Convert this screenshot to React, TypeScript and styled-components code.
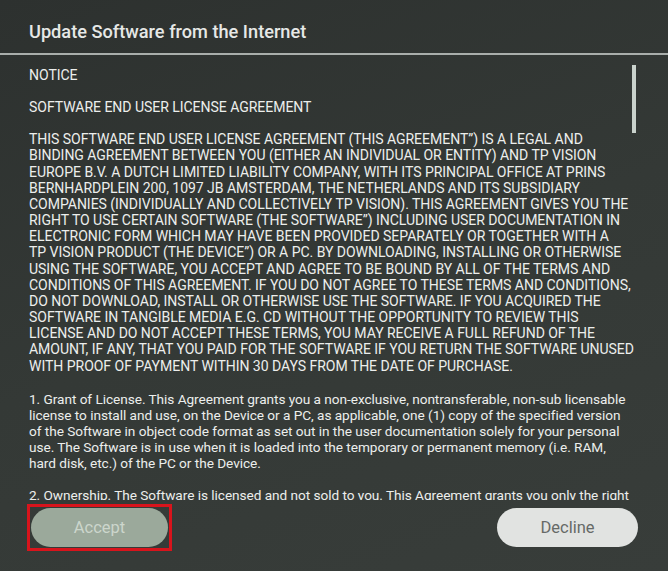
import React from "react";
import styled, { createGlobalStyle } from "styled-components";

const Global = createGlobalStyle`
  html, body { margin: 0; padding: 0; }
  body { width: 668px; height: 571px; overflow: hidden; background: #333835; }
`;

const Screen = styled.div`
  width: 668px;
  height: 571px;
  display: flex;
  flex-direction: column;
  background: linear-gradient(160deg, #2d312f 0%, #343936 50%, #383d3a 100%);
  font-family: Roboto, "Liberation Sans", sans-serif;
  color: #eef0ee;
  overflow: hidden;
`;

const Header = styled.div`
  height: 53px;
  display: flex;
  align-items: center;
  padding: 0 29px;
  border-bottom: 2px solid #a9aeab;
  flex-shrink: 0;
`;

const Title = styled.h1`
  margin: 0;
  font-size: 18.2px;
  font-weight: 500;
  color: #e6e8e6;
  padding-top: 10px;
`;

const Body = styled.div`
  position: relative;
  height: 445px;
  overflow: hidden;
  flex-shrink: 0;
`;

const Content = styled.div`
  padding: 12px 0 0 29px;
  line-height: 16.15px;
  color: #eceeec;
`;

const Para = styled.p<{ $caps?: boolean; $gap?: number }>`
  margin: 0 0 ${(p) => p.$gap ?? 16}px 0;
  white-space: nowrap;
  font-size: ${(p) => (p.$caps ? "14.05px" : "13.65px")};
  letter-spacing: -0.05px;
`;

const ScrollThumb = styled.div`
  position: absolute;
  left: 632px;
  top: 10px;
  width: 4px;
  height: 68px;
  background: #c9d2cc;
`;

const Footer = styled.div`
  flex: 1;
  display: flex;
  justify-content: space-between;
  align-items: flex-start;
  padding: 4px 30px 0 27px;
`;

const Focus = styled.div`
  border: 3px solid #d8141c;
  padding: 1px;
  display: flex;
`;

const Button = styled.button<{ $variant: "accept" | "decline" }>`
  width: ${(p) => (p.$variant === "accept" ? "137px" : "141px")};
  height: 39px;
  margin-top: ${(p) => (p.$variant === "accept" ? "0" : "4px")};
  border: none;
  border-radius: 20px;
  font-family: Roboto, "Liberation Sans", sans-serif;
  font-size: 16.5px;
  background: ${(p) => (p.$variant === "accept" ? "#9ba99b" : "#e1e3e1")};
  color: ${(p) => (p.$variant === "accept" ? "#ccd6cc" : "#666a67")};
  padding: 0;
`;

type P = { lines: string[]; caps?: boolean; gap?: number };

const paragraphs: P[] = [
  { caps: true, lines: ["NOTICE"] },
  { caps: true, lines: ["SOFTWARE END USER LICENSE AGREEMENT"] },
  {
    caps: true,
    gap: 17,
    lines: [
      "THIS SOFTWARE END USER LICENSE AGREEMENT (THIS AGREEMENT\u201d) IS A LEGAL AND",
      "BINDING AGREEMENT BETWEEN YOU (EITHER AN INDIVIDUAL OR ENTITY) AND TP VISION",
      "EUROPE B.V. A DUTCH LIMITED LIABILITY COMPANY, WITH ITS PRINCIPAL OFFICE AT PRINS",
      "BERNHARDPLEIN 200, 1097 JB AMSTERDAM, THE NETHERLANDS AND ITS SUBSIDIARY",
      "COMPANIES (INDIVIDUALLY AND COLLECTIVELY TP VISION). THIS AGREEMENT GIVES YOU THE",
      "RIGHT TO USE CERTAIN SOFTWARE (THE SOFTWARE\u201d) INCLUDING USER DOCUMENTATION IN",
      "ELECTRONIC FORM WHICH MAY HAVE BEEN PROVIDED SEPARATELY OR TOGETHER WITH A",
      "TP VISION PRODUCT (THE DEVICE\u201d) OR A PC. BY DOWNLOADING, INSTALLING OR OTHERWISE",
      "USING THE SOFTWARE, YOU ACCEPT AND AGREE TO BE BOUND BY ALL OF THE TERMS AND",
      "CONDITIONS OF THIS AGREEMENT. IF YOU DO NOT AGREE TO THESE TERMS AND CONDITIONS,",
      "DO NOT DOWNLOAD, INSTALL OR OTHERWISE USE THE SOFTWARE. IF YOU ACQUIRED THE",
      "SOFTWARE IN TANGIBLE MEDIA E.G. CD WITHOUT THE OPPORTUNITY TO REVIEW THIS",
      "LICENSE AND DO NOT ACCEPT THESE TERMS, YOU MAY RECEIVE A FULL REFUND OF THE",
      "AMOUNT, IF ANY, THAT YOU PAID FOR THE SOFTWARE IF YOU RETURN THE SOFTWARE UNUSED",
      "WITH PROOF OF PAYMENT WITHIN 30 DAYS FROM THE DATE OF PURCHASE.",
    ],
  },
  {
    lines: [
      "1. Grant of License. This Agreement grants you a non-exclusive, nontransferable, non-sub licensable",
      "license to install and use, on the Device or a PC, as applicable, one (1) copy of the specified version",
      "of the Software in object code format as set out in the user documentation solely for your personal",
      "use. The Software is in use when it is loaded into the temporary or permanent memory (i.e. RAM,",
      "hard disk, etc.) of the PC or the Device.",
    ],
  },
  {
    lines: [
      "2. Ownership. The Software is licensed and not sold to you. This Agreement grants you only the right",
      "to use the Software.",
    ],
  },
];

export default function App() {
  return (
    <>
      <Global />
      <Screen>
        <Header>
          <Title>Update Software from the Internet</Title>
        </Header>
        <Body>
          <Content>
            {paragraphs.map((p, i) => (
              <Para key={i} $caps={p.caps} $gap={p.gap}>
                {p.lines.map((l, j) => (
                  <React.Fragment key={j}>
                    {l}
                    {j < p.lines.length - 1 && <br />}
                  </React.Fragment>
                ))}
              </Para>
            ))}
          </Content>
          <ScrollThumb />
        </Body>
        <Footer>
          <Focus>
            <Button $variant="accept">Accept</Button>
          </Focus>
          <Button $variant="decline">Decline</Button>
        </Footer>
      </Screen>
    </>
  );
}
